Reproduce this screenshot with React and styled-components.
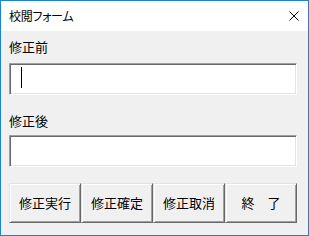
import styled, { createGlobalStyle } from "styled-components";

const GlobalStyle = createGlobalStyle`
  * {
    box-sizing: border-box;
  }

  body {
    margin: 0;
    background: #ffffff;
    font-family: "Noto Sans CJK JP", "Noto Sans", sans-serif;
  }
`;

const Window = styled.div`
  width: 309px;
  height: 236px;
  border: 1px solid #1883d7;
  background: #f0f0f0;
  display: flex;
  flex-direction: column;
  overflow: hidden;
`;

const TitleBar = styled.header`
  height: 30px;
  flex: none;
  background: #ffffff;
  display: flex;
  align-items: center;
  justify-content: space-between;
  padding: 0 9px 0 8px;
`;

const Title = styled.span`
  font-size: 12px;
  line-height: 16px;
  font-feature-settings: "palt";
  letter-spacing: -0.3px;
  color: #000000;
`;

const CloseIcon = styled.svg`
  width: 10px;
  height: 10px;
  display: block;
`;

const Body = styled.main`
  flex: 1;
  display: flex;
  flex-direction: column;
  padding: 8px 11px 0 8px;
`;

const Label = styled.div`
  font-size: 13px;
  line-height: 16px;
  height: 16px;
  color: #000000;
  margin-top: ${(p) => p.$top || 0}px;
`;

const TextBox = styled.div`
  height: 32px;
  margin-top: ${(p) => p.$top || 0}px;
  background: #ffffff;
  border-style: solid;
  border-width: 1px;
  border-color: #a0a0a0 #ffffff #ffffff #a0a0a0;
  box-shadow: inset 1px 1px 0 #696969, inset -1px -1px 0 #e3e3e3;
  padding: 3px 0 0 11px;
`;

const Caret = styled.span`
  display: block;
  width: 1px;
  height: 21px;
  background: #000000;
`;

const ButtonRow = styled.div`
  margin-top: 16px;
  display: grid;
  grid-template-columns: repeat(4, 72px);
`;

const Button = styled.button`
  height: 40px;
  margin: 0;
  padding: 0;
  background: #f0f0f0;
  border-style: solid;
  border-width: 1px;
  border-color: #e3e3e3 #696969 #696969 #e3e3e3;
  box-shadow: inset 1px 1px 0 #ffffff, inset -1px -1px 0 #a0a0a0;
  font-family: "Noto Sans CJK JP", "Noto Sans", sans-serif;
  font-size: 13px;
  line-height: 16px;
  color: #000000;
  white-space: pre;
`;

export default function App() {
  return (
    <>
      <GlobalStyle />
      <Window>
        <TitleBar>
          <Title>校閲フォーム</Title>
          <CloseIcon viewBox="0 0 10 10">
            <path d="M0.5 0.5 L9.5 9.5 M9.5 0.5 L0.5 9.5" stroke="#000" strokeWidth="1" />
          </CloseIcon>
        </TitleBar>
        <Body>
          <Label>修正前</Label>
          <TextBox $top={8}>
            <Caret />
          </TextBox>
          <Label $top={18}>修正後</Label>
          <TextBox $top={6} />
          <ButtonRow>
            <Button>修正実行</Button>
            <Button>修正確定</Button>
            <Button>修正取消</Button>
            <Button>終　了</Button>
          </ButtonRow>
        </Body>
      </Window>
    </>
  );
}
